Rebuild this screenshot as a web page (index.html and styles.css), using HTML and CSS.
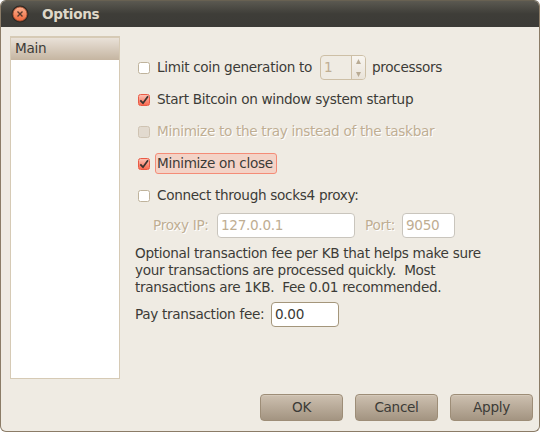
FILE: index.html
```html
<!DOCTYPE html>
<html lang="en">
<head>
<meta charset="utf-8">
<title>Options</title>
<link rel="stylesheet" href="styles.css">
</head>
<body>
<div class="window">
  <header class="titlebar">
    <svg class="close" width="18" height="18" viewBox="0 0 18 18">
      <defs><linearGradient id="orb" x1="0" y1="0" x2="0" y2="1"><stop offset="0" stop-color="#fbb08f"/><stop offset="1" stop-color="#f0683c"/></linearGradient></defs>
      <circle cx="9" cy="9" r="8.5" fill="#292824"/>
      <circle cx="9" cy="9" r="7" fill="url(#orb)" stroke="#ad5030" stroke-width=".8"/>
      <path d="M6.5 6.5l5 5M11.5 6.5l-5 5" stroke="#57392c" stroke-width="1.4"/>
    </svg>
    <h1>Options</h1>
  </header>
  <div class="body">
    <nav class="sidebar"><div class="item">Main</div></nav>
    <main class="panel">
      <div class="row"><span class="check"></span><span class="label limit">Limit coin generation to</span>
        <span class="spinner"><span class="value">1</span><span class="steps"><svg width="13" height="23" viewBox="0 0 13 23"><path d="M4 8l2.5-5L9 8zM4 16h5l-2.5 5z" fill="#b9ab94"/></svg></span></span>
        <span class="after">processors</span></div>
      <div class="row"><span class="check on"><svg width="12" height="12" viewBox="0 0 12 12"><path d="M2.3 6.4L5 9.2l5-7" fill="none" stroke="#3c3430" stroke-width="1.8"/></svg></span><span class="label">Start Bitcoin on window system startup</span></div>
      <div class="row disabled"><span class="check off"></span><span class="label">Minimize to the tray instead of the taskbar</span></div>
      <div class="row"><span class="check on"><svg width="12" height="12" viewBox="0 0 12 12"><path d="M2.3 6.4L5 9.2l5-7" fill="none" stroke="#3c3430" stroke-width="1.8"/></svg></span><span class="label focus">Minimize on close</span></div>
      <div class="row"><span class="check"></span><span class="label">Connect through socks4 proxy:</span></div>
      <div class="proxy disabled"><span class="ip-label">Proxy IP:</span><span class="field ip">127.0.0.1</span><span class="port-label">Port:</span><span class="field port">9050</span></div>
      <p class="note">Optional transaction fee per KB that helps make sure
your transactions are processed quickly.  Most
transactions are 1KB.  Fee 0.01 recommended.</p>
      <div class="fee"><span class="fee-label">Pay transaction fee:</span><span class="field amount">0.00</span></div>
    </main>
  </div>
  <footer class="actions"><button>OK</button><button>Cancel</button><button>Apply</button></footer>
</div>
</body>
</html>
```
FILE: styles.css
```css
* { box-sizing: border-box; }
body {
  margin: 0;
  background: #fff;
  color: #3c3b37;
  font: 13.6px/17px "DejaVu Sans", sans-serif;
  letter-spacing: -0.31px;
}
.window {
  width: 540px;
  height: 432px;
  display: flex;
  flex-direction: column;
  overflow: hidden;
  border: 1px solid #8b7c67;
  border-top-color: #686152;
  border-radius: 6px;
  background: #efebe3;
}
.titlebar {
  height: 26px;
  flex: none;
  display: flex;
  align-items: center;
  padding-left: 10px;
  background: linear-gradient(#5b5951, #3e3d38 50%, #3c3b37);
}
.close { flex: none; }
h1 {
  margin: 0 0 0 13px;
  color: #dfd8c8;
  font-size: 13.6px;
  font-weight: bold;
  line-height: 17px;
}
.body { display: flex; height: 352px; flex: none; }
.sidebar {
  width: 110px;
  height: 343px;
  margin: 9px 15px 0 9px;
  flex: none;
  border: 1px solid #d6cab5;
  background: #fff;
}
.item {
  height: 23px;
  padding: 1px 4px;
  line-height: 19px;
  background: linear-gradient(#e9e1d8, #c5b5a1);
  border-top: 1px solid #d6cab5;
}
.panel { padding-top: 24px; width: 390px; }
.row { display: flex; align-items: center; height: 32px; padding-left: 3px; white-space: nowrap; }
.check {
  width: 12px;
  height: 12px;
  margin: 2px 7px 0 0;
  flex: none;
  border: 1px solid #bfb39c;
  border-radius: 2.5px;
  background: #fff;
}
.check svg { display: block; margin: -1px; }
.on { border-color: #ea5a45; background: linear-gradient(#fac0b3, #fb6a50); }
.off { border-color: #cfc3b2; background: #e2dacf; }
.disabled { color: #bfae93; text-shadow: 1px 1px #fff; }
.limit { width: 163px; }
.focus {
  width: 122px;
  height: 21px;
  margin-left: -2px;
  padding-left: 1px;
  line-height: 19px;
  border: 1px solid #f48c77;
  border-radius: 3px;
  background: #f3d3c7;
}
.spinner {
  width: 46px;
  height: 25px;
  display: flex;
  border: 1px solid #cdbfa6;
  border-radius: 4px;
  color: #bfae93;
  line-height: 23px;
}
.value { width: 31px; padding-left: 3px; border-right: 1px solid #cdbfa6; }
.steps { flex: 1; background: linear-gradient(#f8f5f0, #e9e3d9); border-radius: 0 3px 3px 0; }
.steps svg { display: block; }
.after { margin-left: 6px; }
.proxy { display: flex; align-items: center; height: 25px; margin-top: 2px; padding-left: 18px; }
.ip-label { width: 64px; }
.port-label { width: 37px; margin-left: 10px; }
.field {
  height: 25px;
  padding-left: 3px;
  line-height: 23px;
  border: 1px solid #c9c5bd;
  border-radius: 4px;
  background: #fff;
  text-shadow: none;
}
.ip { width: 138px; }
.port { width: 53px; }
.note { margin: 7px 0 0; white-space: pre; }
.fee { display: flex; align-items: center; height: 25px; margin-top: 6px; }
.fee-label { width: 136px; }
.amount { width: 68px; border-color: #a4967b; }
.actions { display: flex; justify-content: flex-end; gap: 12px; padding: 15px 6px 0 0; }
button {
  width: 83px;
  height: 27px;
  padding: 0 0 1px;
  border: 1px solid #9d8d77;
  border-radius: 4px;
  background: linear-gradient(#cdc0b0, #a39481);
  box-shadow: inset 0 1px #d4c8b9;
  color: #3c3b37;
  font: inherit;
  letter-spacing: inherit;
}
```
